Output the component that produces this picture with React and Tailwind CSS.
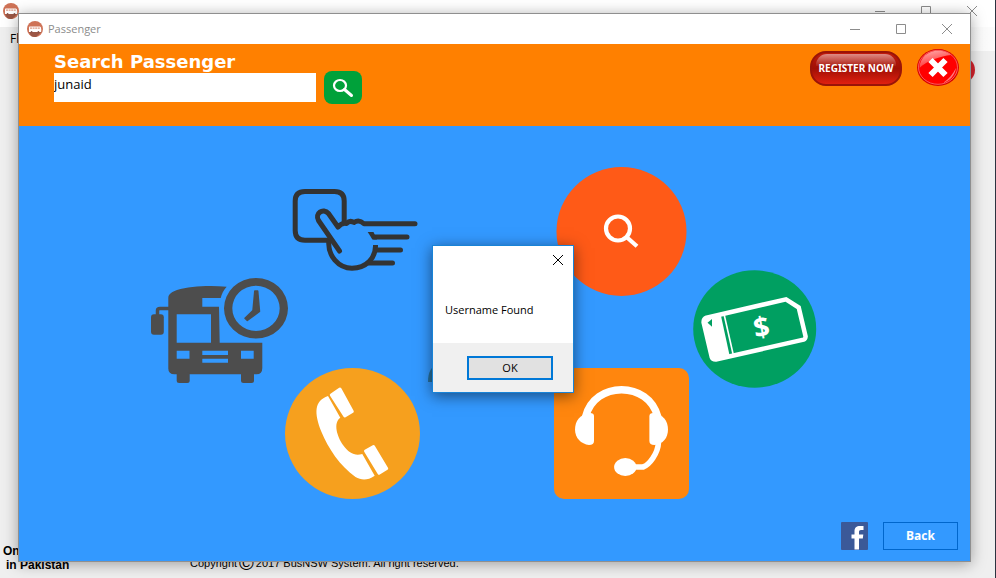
import React from "react";

function BusBadge({ label }) {
  return (
    <svg width="16" height="16" viewBox="0 0 16 16" role="img" aria-label={label}>
      <circle cx="8" cy="8" r="8" fill="#cf7357" />
      <path d="M15 10L9.5 15.8A8 8 0 0 1 4 15L2 11Z" fill="#9c5745" />
      <path d="M2.5 5.5H13Q14.2 5.5 14.2 8.2V11H2V7Q2 5.5 2.5 5.5Z" fill="#fff" />
      <path d="M3 7.2H13.2" stroke="#dd9a85" strokeWidth="1.2" strokeDasharray="2 .6" />
      <circle cx="4.6" cy="11" r="0.9" fill="#8a5348" />
      <circle cx="11.4" cy="11" r="0.9" fill="#8a5348" />
    </svg>
  );
}

function WindowControls() {
  return (
    <div className="flex h-full items-center">
      <button type="button" aria-label="Minimize" className="flex h-full w-[46px] items-center justify-center">
        <svg width="12" height="12" viewBox="0 0 12 12" fill="none" stroke="#8c8c8c">
          <path d="M1 6.5H11" />
        </svg>
      </button>
      <button type="button" aria-label="Maximize" className="flex h-full w-[46px] items-center justify-center">
        <svg width="12" height="12" viewBox="0 0 12 12" fill="none" stroke="#8c8c8c">
          <path d="M1.5 1.5H10.5V10.5H1.5Z" />
        </svg>
      </button>
      <button type="button" aria-label="Close" className="flex h-full w-[46px] items-center justify-center">
        <svg width="12" height="12" viewBox="0 0 12 12" fill="none" stroke="#8c8c8c">
          <path d="M1 1L11 11M11 1L1 11" />
        </svg>
      </button>
    </div>
  );
}

function CloseBadge() {
  return (
    <svg width="42" height="37" viewBox="0 0 42 37" className="block">
      <defs>
        <linearGradient id="gloss" x1="0" y1="0" x2="0.4" y2="1">
          <stop offset="0" stopColor="#ffb0b0" />
          <stop offset="1" stopColor="#ff2a2a" />
        </linearGradient>
      </defs>
      <ellipse cx="21" cy="18.5" rx="21" ry="18.5" fill="#d80000" />
      <ellipse cx="21" cy="18.3" rx="19.5" ry="17" fill="#ff0000" stroke="#ff9a9a" strokeWidth="0.6" />
      <path d="M2.5 19C3 8 11 2 21 1.8C27 1.8 31 3.5 34 6C24 7 9 12 2.5 19Z" fill="url(#gloss)" />
      <path d="M26 34C33 32 38 26 39 19C36 25 32 30 26 34Z" fill="#ff7a7a" />
      <path d="M13.5 11L28.5 26M28.5 11L13.5 26" stroke="#fff" strokeWidth="6" />
    </svg>
  );
}

function BusTimesIcon() {
  return (
    <svg width="135" height="112" viewBox="150 277 135 112" className="overflow-visible" fill="#4d4d4d">
      <path
        fillRule="evenodd"
        d="M168.3 298C168.3 294 172 292 177 290C190 286 210 285 226.7 286.7Q222.5 291 220.7 298H202.3V306.7H219L219.7 342.7H262.3V368Q262.3 374.3 256.5 374.3H174.5Q168.3 374.3 168.3 368.5ZM176.7 314.3V342.7H211V314.3ZM176.7 350.7V358.7H189.5V350.7ZM241 350.7V358.7H253.7V350.7ZM202.3 350.7V355H228V350.7ZM202.3 358.7V362.7H228V358.7Z"
      />
      <rect x="176.7" y="372" width="13" height="11" rx="2.5" />
      <rect x="241" y="372" width="13" height="11" rx="2.5" />
      <rect x="151" y="314.3" width="12.8" height="20.5" rx="3" />
      <path d="M157.5 316V310.5Q157.5 308.5 160 308.5H170" fill="none" stroke="#4d4d4d" strokeWidth="3.5" />
      <path
        fillRule="evenodd"
        d="M224 308.3A32 30.3 0 1 1 288 308.3A32 30.3 0 1 1 224 308.3ZM232.3 308.3A23.7 22.6 0 1 0 279.7 308.3A23.7 22.6 0 1 0 232.3 308.3Z"
      />
      <path
        d="M254.8 291H257.7L259.5 311.5L247.3 320.5L245 318.3L253 310.5Z"
        stroke="#4d4d4d"
        strokeWidth="1.5"
        strokeLinejoin="round"
      />
    </svg>
  );
}

function TapCardIcon() {
  return (
    <svg
      width="135"
      height="129"
      viewBox="285 167 135 129"
      fill="none"
      stroke="#333"
      strokeWidth="5"
      strokeLinecap="round"
    >
      <path strokeLinecap="butt" d="M344.2 223V201Q344.2 191.5 334.5 191.5H305Q295.2 191.5 295.2 201V230.5Q295.2 240.2 305 240.2H331" />
      <path strokeLinejoin="round" d="M339.5 251L318.5 220.5C314.5 213.5 323 207.5 328.5 213.5L338 227Q342 222.5 346.5 223.5Q350 219.8 354 222.5Q359 219 364 223.8H415" />
      <path strokeLinecap="butt" d="M329 240C327 256 339 268.2 352 268.2C366 268.2 376 258 375.5 245" />
      <path d="M374 237H407M377 250H400.5M368 263H392.5" />
      <path d="M367.7 232H373.5L377 239.5H372.5Z" fill="#333" stroke="none" />
    </svg>
  );
}

function PhoneIcon() {
  return (
    <svg width="135" height="131" viewBox="285 368 135 131">
      <ellipse cx="352.5" cy="433.5" rx="67.5" ry="65.5" fill="#f6a01e" />
      <path
        fill="#fff"
        d="M328 396L340.3 417.7C333 423 337 436 343 445C349 453.5 355 456 362.3 454L374.7 475.7C367 481 361 480 355.5 477C340 466 328 448 321.5 432C314 413 314 401 328 396Z"
      />
      <g fill="#fff" stroke="#fff" strokeWidth="3" strokeLinejoin="round">
        <path d="M331.3 395L340 389L352.3 411.5L344.8 416Z" />
        <path d="M365.5 451L373.5 446.5L386.7 468.5L379 473.3Z" />
      </g>
    </svg>
  );
}

function HiddenEmblem() {
  return (
    <svg width="134" height="332" viewBox="420 167 134 332">
      <path d="M428 382C428 372 431 367 437 365V382Z" fill="#256f9c" />
    </svg>
  );
}

function FindIcon() {
  return (
    <svg width="135" height="129" viewBox="554 167 135 129">
      <ellipse cx="621.5" cy="231.5" rx="65" ry="64.5" fill="#ff5a17" />
      <g fill="none" stroke="#fff" strokeWidth="4.2">
        <circle cx="618" cy="228.5" r="12" />
        <path d="M626.5 237L637 246.3" />
      </g>
    </svg>
  );
}

function HeadsetIcon() {
  return (
    <svg width="135" height="131" viewBox="554 368 135 131">
      <rect x="554" y="368" width="135" height="131" rx="10" fill="#ff860e" />
      <path d="M585.5 417C594 380.5 649 380.5 657.8 417" fill="none" stroke="#fff" strokeWidth="7.5" />
      <path
        fill="#fff"
        d="M594 416Q594 413 590 413C580 414 575 421 575 429.5C575 438 581 444 589 445Q594 445 594 441Z"
      />
      <path
        fill="#fff"
        d="M649.4 416Q649.4 413 653.4 413C663 414 668 421 668 429.5C668 438 663 444 654.4 445Q649.4 445 649.4 441Z"
      />
      <path d="M658.5 442C658 454 649 465 643 467H632" fill="none" stroke="#fff" strokeWidth="5.6" />
      <ellipse cx="625.3" cy="467" rx="11.2" ry="9" fill="#fff" />
    </svg>
  );
}

function TicketIcon() {
  return (
    <svg width="124" height="126" viewBox="693 270 124 126">
      <ellipse cx="754.7" cy="329" rx="61.5" ry="58.7" fill="#009f61" />
      <path
        d="M706.5 317.7L786 299.3L798.7 307.5L805.6 336.5Q805.5 339 803.5 339.7L716 359.4Q712.5 359.5 711.7 357L703.6 322.5Q703.5 318.8 706.5 317.7Z"
        fill="none"
        stroke="#fff"
        strokeWidth="4.5"
      />
      <path d="M706 317.5L720.7 314.5L729.7 356L715 359.5L711 356L703 321Z" fill="#fff" />
      <path d="M724 314L733.3 355" stroke="#fff" strokeWidth="1.6" />
      <path d="M707.5 322.7L712 319V326.7Z" fill="#009f61" />
      <text
        x="761.5"
        y="337"
        textAnchor="middle"
        transform="rotate(-10 761.5 327.5)"
        className="fill-white font-['Noto_Sans',sans-serif] text-[28px] font-bold"
      >
        $
      </text>
    </svg>
  );
}

function BackgroundApp() {
  return (
    <div className="flex h-full flex-col overflow-hidden border-r border-[#2b3340] bg-[#efefef] font-['Open_Sans',sans-serif] text-[12px] text-black">
      <div className="flex h-[27px] items-start justify-between bg-white pl-[3px]">
        <div className="flex h-[22px] items-center">
          <BusBadge label="BusNSW" />
        </div>
        <div className="h-[22px]">
          <WindowControls />
        </div>
      </div>
      <div className="flex h-6 items-center bg-linear-to-r from-[#efefef] to-[#fbfbfb] pl-[10px]">Fl</div>
      <div className="flex justify-end pt-[6px] pr-5">
        <svg width="26" height="26" viewBox="0 0 26 26">
          <circle cx="13" cy="13" r="13" fill="#d8232d" />
        </svg>
      </div>
      <div className="mt-auto flex items-end pb-[6px] font-['Liberation_Sans',sans-serif]">
        <div className="w-[190px] pl-[3px] text-[12px] leading-[14px] font-bold">
          <p>On</p>
          <p className="pl-[3px]">in Pakistan</p>
        </div>
        <p className="flex items-center gap-[2px] text-[11px] leading-[18px]">
          Copyright <span className="text-[20px] leading-4">©</span> 2017 BusNSW System. All right reserved.
        </p>
      </div>
    </div>
  );
}

function PassengerWindow() {
  return (
    <section className="absolute top-[13px] right-[25px] bottom-4 left-[18px] flex flex-col border border-[#8f8f8f] bg-[#3399ff] shadow-[0_2px_14px_rgba(0,0,0,0.35)]">
      <div className="flex h-[30px] shrink-0 items-center justify-between bg-white pl-2">
        <div className="flex items-center gap-[5px] font-['Open_Sans',sans-serif] text-[11px] text-[#8c8c8c]">
          <BusBadge label="Passenger window" />
          <h1>Passenger</h1>
        </div>
        <WindowControls />
      </div>

      <header className="flex h-[82px] shrink-0 items-start justify-between bg-[#ff8000] pr-[11px] pl-[35px]">
        <form className="pt-2" onSubmit={(e) => e.preventDefault()}>
          <label
            htmlFor="passenger"
            className="block font-['DejaVu_Sans',sans-serif] text-[18px] leading-[19px] font-bold text-white"
          >
            Search Passenger
          </label>
          <div className="flex items-center gap-2">
            <input
              id="passenger"
              type="text"
              defaultValue="junaid"
              className="h-[29px] w-[262px] bg-white pb-2 font-['Open_Sans',sans-serif] text-[13px] text-black outline-none"
            />
            <button
              type="submit"
              aria-label="Search"
              className="flex h-[33px] w-[38px] items-center justify-center rounded-[8px] bg-[#00a13a]"
            >
              <svg width="22" height="20" viewBox="0 0 22 20" fill="none" stroke="#fff">
                <ellipse cx="8" cy="7.5" rx="6" ry="5.5" strokeWidth="2.2" />
                <path d="M12.5 11.5L19.5 17.5" strokeWidth="3" strokeLinecap="round" />
              </svg>
            </button>
          </div>
        </form>
        <div className="flex items-end gap-[15px] pt-[5px]">
          <button
            type="button"
            className="relative h-[35px] w-[92px] rounded-[16px] border-2 border-[#9a1408] bg-linear-to-b from-[#c01a0c] via-[#a01005] to-[#e02010] font-['Noto_Sans',sans-serif] text-[10px] font-bold whitespace-nowrap text-white"
          >
            <span className="absolute inset-x-1 top-px h-3 rounded-t-[11px] bg-linear-to-b from-white/50 to-white/5" />
            <span className="relative">REGISTER NOW</span>
          </button>
          <button type="button" aria-label="Close passenger search">
            <CloseBadge />
          </button>
        </div>
      </header>

      <main className="flex grow flex-col justify-between">
        <div className="flex items-center justify-center pt-[41px] pr-[22px]">
          <button type="button" aria-label="Bus times">
            <BusTimesIcon />
          </button>
          <div className="flex flex-col gap-[72px]">
            <button type="button" aria-label="Tap card">
              <TapCardIcon />
            </button>
            <button type="button" aria-label="Call">
              <PhoneIcon />
            </button>
          </div>
          <HiddenEmblem />
          <div className="flex flex-col gap-[72px]">
            <button type="button" aria-label="Find passenger">
              <FindIcon />
            </button>
            <button type="button" aria-label="Support">
              <HeadsetIcon />
            </button>
          </div>
          <button type="button" aria-label="Tickets" className="ml-1">
            <TicketIcon />
          </button>
        </div>
        <footer className="flex items-center justify-end gap-[15px] pr-3 pb-[11px]">
          <a href="#facebook" aria-label="Facebook">
            <svg width="27" height="28" viewBox="0 0 27 28" className="block">
              <rect width="27" height="28" rx="1" fill="#3b5998" />
              <path
                fill="#fff"
                d="M13.5 27.5V16.5H10.5V12.5H13.5V9.5C13.5 5.5 15.5 4 19 4H22.5V8H20C18.5 8 18 8.7 18 10V12.5H22.3L21.8 16.5H18V27.5Z"
              />
            </svg>
          </a>
          <button
            type="button"
            className="h-7 w-[75px] border border-[#0066cc] font-['Open_Sans',sans-serif] text-[12px] font-bold text-white"
          >
            Back
          </button>
        </footer>
      </main>
    </section>
  );
}

function MessageBox() {
  return (
    <div
      role="dialog"
      aria-labelledby="message"
      className="absolute top-[245px] left-[432px] w-[142px] border border-[#1883d7] bg-white font-['Open_Sans',sans-serif] text-[11px] text-black shadow-[0_3px_14px_rgba(0,0,0,0.5)]"
    >
      <div className="flex h-7 items-center justify-end pr-[9px]">
        <button type="button" aria-label="Dismiss">
          <svg width="12" height="12" viewBox="0 0 12 12" stroke="#000" className="block">
            <path d="M1 1L11 11M11 1L1 11" />
          </svg>
        </button>
      </div>
      <p id="message" className="h-[69px] pt-7 pl-3 leading-4 whitespace-nowrap">
        Username Found
      </p>
      <div className="flex h-[49px] items-center justify-end bg-[#f0f0f0] pr-5">
        <button type="button" className="h-6 w-[86px] border-2 border-[#0078d7] bg-[#e1e1e1] leading-5">
          OK
        </button>
      </div>
    </div>
  );
}

export default function App() {
  return (
    <div className="relative h-screen overflow-hidden">
      <BackgroundApp />
      <PassengerWindow />
      <MessageBox />
    </div>
  );
}
